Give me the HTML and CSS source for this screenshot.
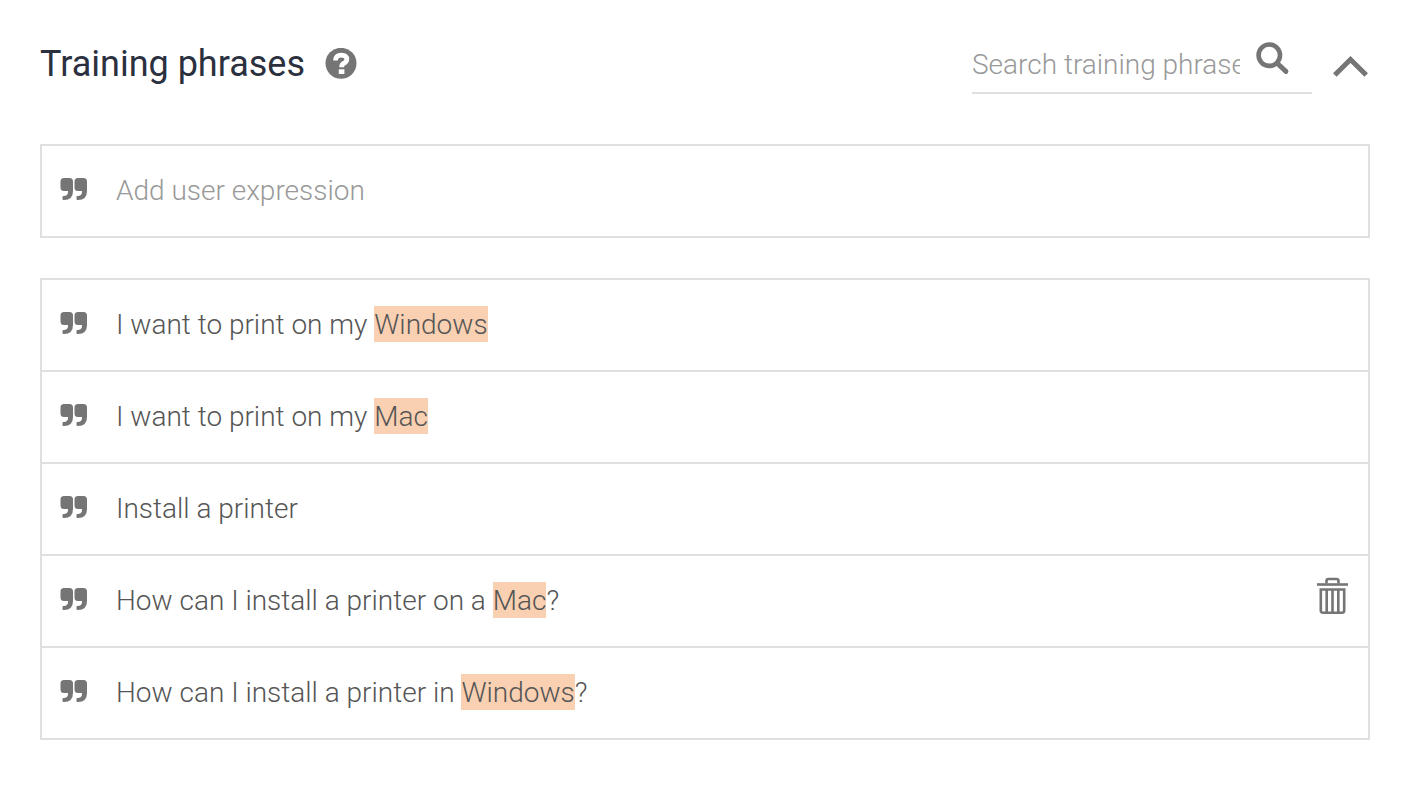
FILE: index.html
```html
<!DOCTYPE html>
<html lang="en">
<head>
<meta charset="utf-8">
<meta name="viewport" content="width=device-width, initial-scale=1">
<title>Training phrases</title>
<link rel="stylesheet" href="styles.css">
</head>
<body>
<svg class="sprite" aria-hidden="true">
  <symbol id="quote" viewBox="0 0 28 24">
    <path d="M4 1h5.500q3.500 0 3.500 3.500V14q0 9-9 9H3.500q-1 0-1-1v-2q0-1 1-1 4.500 0 4.500-4v-1H4q-3.500 0-3.500-3.500v-6Q.5 1 4 1z"/>
    <path d="M18 1h5.500q3.500 0 3.500 3.500V14q0 9-9 9h-.5q-1 0-1-1v-2q0-1 1-1 4.500 0 4.500-4v-1h-4q-3.500 0-3.500-3.500v-6Q14.500 1 18 1z"/>
  </symbol>
</svg>
<main class="page">
  <header class="header">
    <h1 class="title">Training phrases</h1>
    <button class="icon-button help" type="button" aria-label="Help">
      <svg width="32" height="32" viewBox="0 0 32 32"><circle cx="16" cy="15.300" r="15.500" fill="#757575"/><path d="M10.500 12.500q0-5.300 5.700-5.300 5.600 0 5.600 4.300 0 2-2.700 3.700-2.400 1.200-2.400 3.600v.4" fill="none" stroke="#fff" stroke-width="4.800"/><rect x="13.800" y="21.300" width="5.600" height="4.700" fill="#fff"/></svg>
    </button>
    <div class="search">
      <input class="search-input" type="text" placeholder="Search training phrases" aria-label="Search training phrases">
      <button class="icon-button search-button" type="button" aria-label="Search">
        <svg width="34" height="34" viewBox="0 0 34 34" fill="none" stroke="#757575"><circle cx="13.300" cy="13.200" r="10.700" stroke-width="4.600"/><path d="M21.500 21.500l8.500 8" stroke-width="5"/><path d="M29.800 29.300l.2.200" stroke-width="4.800" stroke-linecap="round"/></svg>
      </button>
    </div>
    <button class="icon-button collapse" type="button" aria-label="Collapse">
      <svg width="38" height="24" viewBox="0 0 38 24" fill="none" stroke="#757575" stroke-width="5"><path d="M2.800 21L18.500 5.500l15.700 15.500"/></svg>
    </button>
  </header>

  <div class="box add">
    <label class="row" for="expression">
      <svg class="quote" aria-hidden="true"><use href="#quote"/></svg>
      <input class="expression" id="expression" type="text" placeholder="Add user expression" aria-label="Add user expression">
    </label>
  </div>

  <ul class="box phrases">
    <li class="row"><svg class="quote" aria-hidden="true"><use href="#quote"/></svg><p class="phrase">I want to print on my <mark class="entity">Windows</mark></p></li>
    <li class="row"><svg class="quote" aria-hidden="true"><use href="#quote"/></svg><p class="phrase">I want to print on my <mark class="entity">Mac</mark></p></li>
    <li class="row"><svg class="quote" aria-hidden="true"><use href="#quote"/></svg><p class="phrase">Install a printer</p></li>
    <li class="row"><svg class="quote" aria-hidden="true"><use href="#quote"/></svg><p class="phrase">How can I install a printer on a <mark class="entity">Mac</mark>?</p>
      <button class="icon-button delete" type="button" aria-label="Delete phrase">
        <svg width="32" height="38" viewBox="0 0 32 38" fill="none" stroke="#757575"><path d="M10.500 6.500V4q0-2 2-2h8q2 0 2 2v2.500" stroke-width="2.600"/><path d="M1 7.500h31" stroke-width="2.600"/><path d="M4.800 12.500h23.400v21q0 2.200-2.200 2.200H7q-2.200 0-2.200-2.200z" stroke-width="2.600"/><path d="M10.700 12.500v23M16.500 12.500v23M22.300 12.500v23" stroke-width="2.600"/></svg>
      </button>
    </li>
    <li class="row"><svg class="quote" aria-hidden="true"><use href="#quote"/></svg><p class="phrase">How can I install a printer in <mark class="entity">Windows</mark>?</p></li>
  </ul>
</main>
</body>
</html>
```
FILE: styles.css
```css
* {
  box-sizing: border-box;
}

body {
  margin: 0;
  background: #fff;
  color: #555;
  font-family: Roboto, "Liberation Sans", sans-serif;
  font-size: 28px;
  font-weight: 300;
  line-height: 36px;
}

.sprite {
  display: none;
}

.page {
  padding: 34px 48px 40px 40px;
}

.header {
  display: flex;
  align-items: center;
  min-height: 60px;
  margin-bottom: 50px;
}

.title {
  margin: 0;
  color: #2b303f;
  font-size: 36px;
  font-weight: 400;
  line-height: 44px;
}

.icon-button {
  display: flex;
  flex: none;
  padding: 0;
  border: 0;
  background: none;
  cursor: pointer;
}

.help {
  margin-left: 20px;
}

.search {
  display: flex;
  align-self: stretch;
  justify-content: space-between;
  width: 340px;
  margin-left: auto;
  padding-right: 22px;
  border-bottom: 2px solid #e0e0e0;
}

.search-input,
.expression {
  min-width: 0;
  padding: 0;
  border: 0;
  outline: 0;
  background: transparent;
  color: #555;
  font: inherit;
}

.search-input {
  width: 268px;
  padding-top: 4px;
}

.search-input::placeholder,
.expression::placeholder {
  color: #999;
  opacity: 1;
}

.search-button {
  align-self: flex-start;
  padding-top: 8px;
}

.collapse {
  margin-left: 20px;
  padding-top: 4px;
}

.box {
  margin: 0;
  padding: 0;
  border: 2px solid #e0e0e0;
  list-style: none;
}

.add {
  margin-bottom: 40px;
}

.row {
  display: flex;
  align-items: center;
  min-height: 90px;
  padding: 0 20px 0 18px;
}

.row + .row {
  min-height: 92px;
  border-top: 2px solid #e0e0e0;
}

.quote {
  flex: none;
  width: 28px;
  height: 24px;
  margin: 0 28px 4px 0;
  fill: #757575;
}

.expression,
.phrase {
  flex: 1;
  margin: 0;
}

.entity {
  padding: 2px 0 1px;
  background: #f9d1b2;
  color: inherit;
}

.delete {
  padding-bottom: 10px;
}
```
